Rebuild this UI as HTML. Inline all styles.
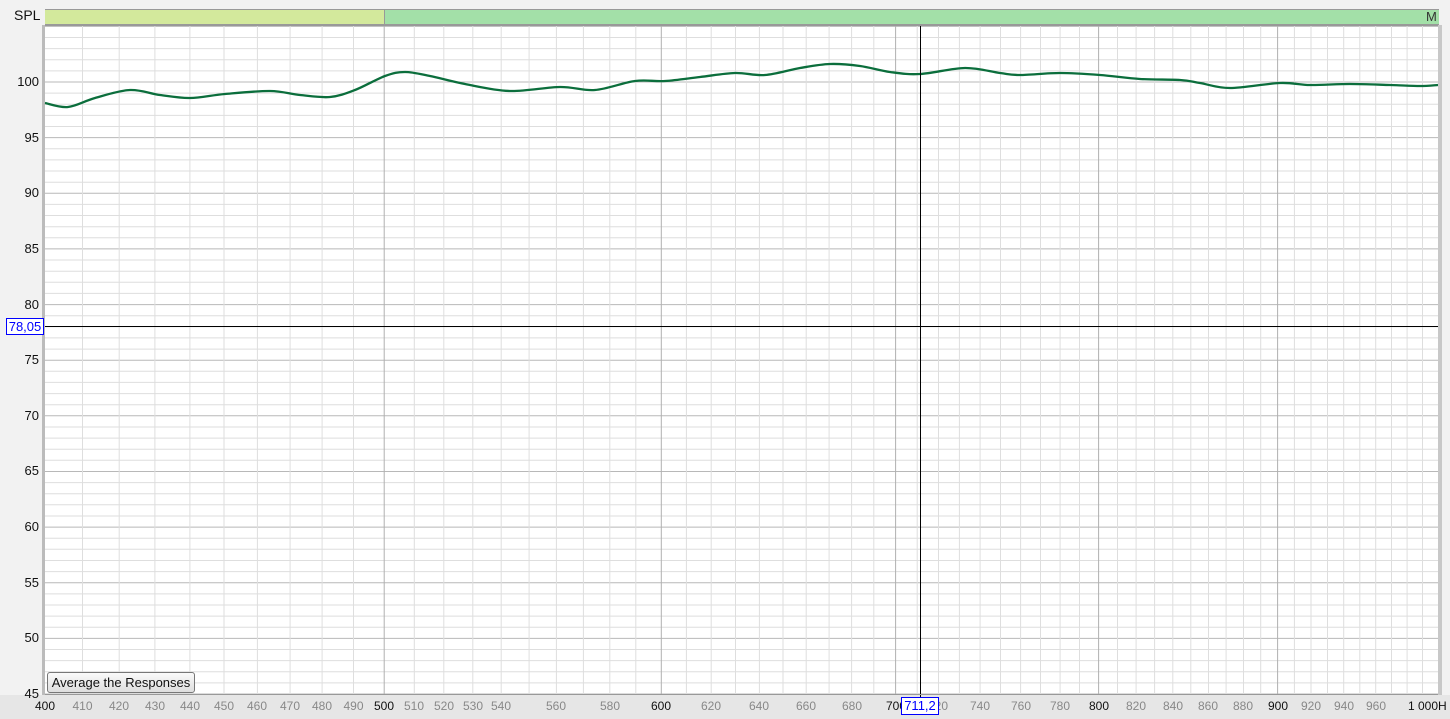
<!DOCTYPE html>
<html><head><meta charset="utf-8"><style>
body{margin:0;width:1450px;height:719px;background:#f2f2f2;font-family:"Liberation Sans",sans-serif;overflow:hidden;position:relative}
.t{position:absolute;font-size:13px;color:#111;white-space:nowrap}
.yl{position:absolute;right:1411px;font-size:13px;color:#111;line-height:14px}
.xl{position:absolute;top:699px;font-size:12px;color:#888;transform:translateX(-50%);line-height:14px;white-space:nowrap}
.xm{color:#111}
</style></head><body>
<div style="position:absolute;left:0;top:695px;width:1450px;height:24px;background:#e6e6e6"></div>
<div class="t" style="left:14px;top:7px;font-size:14px">SPL</div>
<div style="position:absolute;left:45px;top:9px;width:339px;height:14px;background:#d3e99c;border-top:1px solid #999;border-bottom:1px solid #999"></div>
<div style="position:absolute;left:384px;top:9px;width:1054px;height:14px;background:#a3e0a8;border:1px solid #999;border-right:none"></div>
<div class="t" style="left:1426px;top:9px;font-size:13px;color:#333">M</div>
<div style="position:absolute;left:42px;top:25px;width:3px;height:670px;background:#bbb"></div>
<div style="position:absolute;left:1438px;top:25px;width:4px;height:670px;background:#c8c8c8"></div>
<svg id="s" style="position:absolute;left:0;top:0" width="1450" height="719"></svg>
<div class="yl" style="top:75px">100</div>
<div class="yl" style="top:131px">95</div>
<div class="yl" style="top:186px">90</div>
<div class="yl" style="top:242px">85</div>
<div class="yl" style="top:298px">80</div>
<div class="yl" style="top:353px">75</div>
<div class="yl" style="top:409px">70</div>
<div class="yl" style="top:464px">65</div>
<div class="yl" style="top:520px">60</div>
<div class="yl" style="top:576px">55</div>
<div class="yl" style="top:631px">50</div>
<div class="yl" style="top:687px">45</div>
<div class="xl xm" style="left:45px">400</div>
<div class="xl" style="left:82.5px">410</div>
<div class="xl" style="left:119px">420</div>
<div class="xl" style="left:155px">430</div>
<div class="xl" style="left:190px">440</div>
<div class="xl" style="left:224px">450</div>
<div class="xl" style="left:257px">460</div>
<div class="xl" style="left:290px">470</div>
<div class="xl" style="left:322px">480</div>
<div class="xl" style="left:353.5px">490</div>
<div class="xl xm" style="left:384px">500</div>
<div class="xl" style="left:414px">510</div>
<div class="xl" style="left:444px">520</div>
<div class="xl" style="left:473px">530</div>
<div class="xl" style="left:501px">540</div>
<div class="xl" style="left:556px">560</div>
<div class="xl" style="left:610px">580</div>
<div class="xl xm" style="left:661px">600</div>
<div class="xl" style="left:711px">620</div>
<div class="xl" style="left:759px">640</div>
<div class="xl" style="left:806px">660</div>
<div class="xl" style="left:852px">680</div>
<div class="xl xm" style="left:896px">700</div>
<div class="xl" style="left:938px">720</div>
<div class="xl" style="left:980px">740</div>
<div class="xl" style="left:1021px">760</div>
<div class="xl" style="left:1060px">780</div>
<div class="xl xm" style="left:1099px">800</div>
<div class="xl" style="left:1136px">820</div>
<div class="xl" style="left:1173px">840</div>
<div class="xl" style="left:1208px">860</div>
<div class="xl" style="left:1243px">880</div>
<div class="xl xm" style="left:1278px">900</div>
<div class="xl" style="left:1311px">920</div>
<div class="xl" style="left:1344px">940</div>
<div class="xl" style="left:1376px">960</div>
<div class="xl xm" style="left:1408px;transform:none">1 000H</div>
<div style="position:absolute;left:6px;top:318px;width:36px;height:15px;border:1px solid #00f;background:#fff;color:#00f;font-size:13px;line-height:15px;text-align:center">78,05</div>
<div style="position:absolute;left:901px;top:697px;width:36px;height:16px;border:1px solid #00f;background:#fff;color:#00f;font-size:13px;line-height:16px;text-align:center">711,2</div>
<div style="position:absolute;left:47px;top:672px;width:146px;height:19px;border:1px solid #777;border-radius:3px;background:linear-gradient(#fafafa,#dedede);font-size:13px;line-height:19px;text-align:center;color:#111">Average the Responses</div>
<script>
var s=document.getElementById('s'),h='<rect x="45" y="25" width="1393" height="670" fill="#fff"/>';
function X(f){return 45+3500*Math.log10(f/400);}
for(var d=45;d<=105;d++){var y=694-(d-45)*11.127;if(y<25)continue;h+='<line x1="45" x2="1438" y1="'+y.toFixed(1)+'" y2="'+y.toFixed(1)+'" stroke="'+(d%5==0?'#b8b8b8':'#dedede')+'"/>';}
for(var f=410;f<1000;f+=10){var x=X(f);h+='<line y1="25" y2="695" x1="'+x.toFixed(1)+'" x2="'+x.toFixed(1)+'" stroke="'+(f%100==0?'#b0b0b0':'#dedede')+'"/>';}
var p=[[45,103],[68,107],[95,98],[130,90],[160,95],[190,98],[225,94],[270,91],[300,95],[330,97],[355,90],[385,76],[405,72],[430,76],[465,84],[510,91],[560,87],[595,90],[635,81],[665,81],[700,77],[735,73],[765,75],[800,68],[830,64],[860,66],[890,72],[920,74],[965,68],[1000,73],[1020,75],[1060,73],[1100,75],[1140,79],[1180,80],[1200,83],[1230,88],[1280,83],[1310,85],[1350,84],[1390,85],[1420,86],[1438,85]];
var d='M'+p[0][0]+' '+p[0][1];
for(var i=0;i<p.length-1;i++){var a=p[i-1]||p[i],b=p[i],c=p[i+1],e=p[i+2]||c;
d+=' C'+(b[0]+(c[0]-a[0])/6)+' '+(b[1]+(c[1]-a[1])/6)+' '+(c[0]-(e[0]-b[0])/6)+' '+(c[1]-(e[1]-b[1])/6)+' '+c[0]+' '+c[1];}
h+='<path d="'+d+'" fill="none" stroke="#0b6e3c" stroke-width="2.3"/>';
h+='<line x1="920.5" x2="920.5" y1="25" y2="697" stroke="#000"/><line x1="45" x2="1438" y1="326.5" y2="326.5" stroke="#000"/>';
h+='<line x1="45" x2="1438" y1="694.5" y2="694.5" stroke="#999"/><line x1="45" x2="1438" y1="25.5" y2="25.5" stroke="#999"/>';
s.innerHTML=h;
</script>
</body></html>
